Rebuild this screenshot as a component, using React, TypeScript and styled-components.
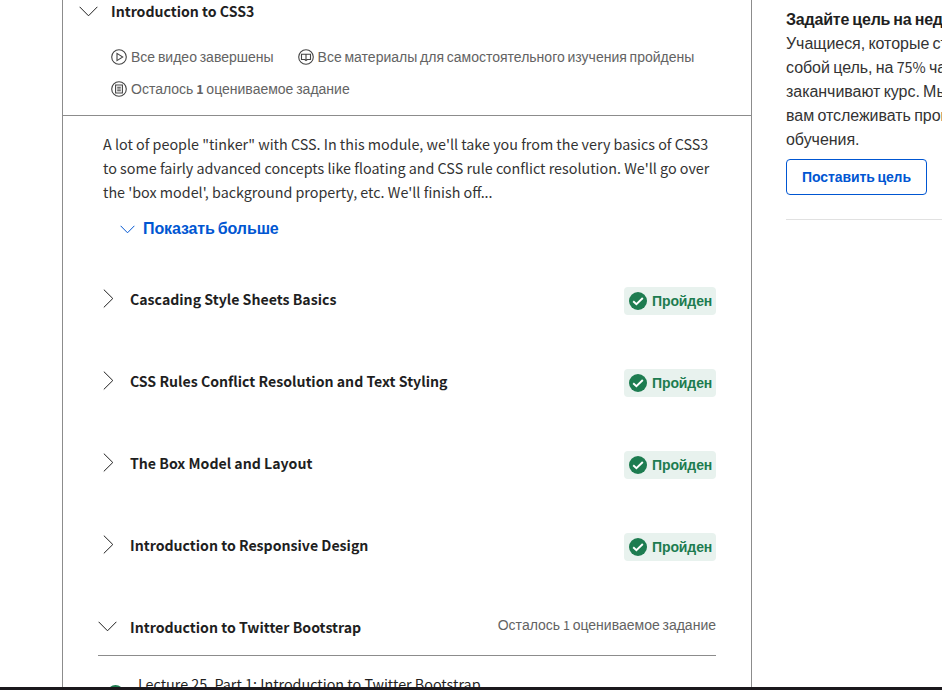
import React from 'react';
import styled, { createGlobalStyle } from 'styled-components';

const latin = '"Noto Sans CJK JP", "Noto Sans", sans-serif';
const cyrillic = '"Liberation Sans", Arial, sans-serif';
const border = '#8c8c8c';
const blue = '#0056d2';
const green = '#1d7c50';

const GlobalStyle = createGlobalStyle`
  * { box-sizing: border-box; }
  body { margin: 0; background: #fff; color: #1f1f1f; overflow: hidden; }
  h2, h3, p { margin: 0; }
`;

const Screen = styled.div`
  display: flex;
  flex-direction: column;
  width: 942px;
  height: 690px;
  overflow: hidden;
`;

const Content = styled.div`
  display: flex;
  flex: 1;
  min-height: 0;
  overflow: hidden;
  padding-left: 62px;
`;

const BottomBar = styled.div`
  flex: none;
  height: 3px;
  background: #1b181c;
`;

const Module = styled.main`
  flex: none;
  width: 690px;
  height: 760px;
  border: solid ${border};
  border-width: 0 1px;
`;

const ModuleHeader = styled.header`
  height: 116px;
  border-bottom: 1px solid ${border};
`;

const ModuleTitle = styled.div`
  display: flex;
  align-items: center;
  height: 22px;
  padding-left: 16px;
  gap: 13px;
`;

const Title = styled.h2`
  font: 700 14.12px/24px ${latin};
  white-space: nowrap;
`;

const Statuses = styled.div`
  display: flex;
  flex-wrap: wrap;
  column-gap: 24px;
  padding: 19px 0 0 48px;
`;

const Status = styled.div`
  display: flex;
  align-items: center;
  height: 32px;
  gap: 4px;
`;

const Muted = styled.span`
  font: 400 14px/20px ${cyrillic};
  word-spacing: -1.1px;
  color: #636363;
  white-space: nowrap;
`;

const Digits = styled.span<{ $bold?: boolean; $size?: number }>`
  font-family: ${latin};
  font-size: ${(p) => p.$size ?? 12.6}px;
  font-weight: ${(p) => (p.$bold ? 700 : 400)};
  line-height: 1;
`;

const Description = styled.p`
  padding: 16px 0 0 40px;
  font: 400 14.34px/24px ${latin};
  white-space: pre-line;
  color: #333;
`;

const ShowMore = styled.button`
  display: flex;
  align-items: center;
  gap: 8px;
  height: 24px;
  margin: 13px 0 0 57px;
  padding: 0;
  border: 0;
  background: none;
  color: ${blue};
  font: 700 16px/24px ${cyrillic};
  word-spacing: -1.2px;
  letter-spacing: -0.12px;
`;

const Lessons = styled.div`
  padding: 17px 35px 0;
`;

const Lesson = styled.section`
  display: flex;
  align-items: center;
  height: 82px;
`;

const LessonIcon = styled.span`
  display: flex;
  width: 32px;
`;

const LessonTitle = styled.h3`
  flex: 1;
  font: 700 14.14px/24px ${latin};
  white-space: nowrap;
`;

const Badge = styled.span`
  display: flex;
  align-items: center;
  gap: 5px;
  width: 92px;
  height: 28px;
  margin-top: 3px;
  padding-left: 5px;
  border-radius: 4px;
  background: #e8f2ee;
  color: ${green};
  font: 700 14px/20px ${cyrillic};
  letter-spacing: -0.1px;
`;

const OpenLesson = styled.section`
  display: flex;
  align-items: center;
  height: 58px;
  margin-top: 12px;
  border-bottom: 1px solid ${border};
`;

const Remaining = styled(Muted)`
  margin-top: -4px;
`;

const Lecture = styled.div`
  display: flex;
  align-items: flex-start;
  gap: 14px;
  padding: 16px 0 0 9px;
  font: 400 14.34px/24px ${latin};
  white-space: nowrap;
`;

const LectureIcon = styled.span`
  display: flex;
  width: 17px;
  padding-top: 13px;
`;

const Aside = styled.aside`
  flex: none;
  width: 250px;
  height: 220px;
  margin-left: 34px;
  padding-top: 8px;
  border-bottom: 1px solid #e1e1e1;
  font: 400 16px/24px ${cyrillic};
  word-spacing: -1.1px;
  letter-spacing: -0.04px;
  white-space: nowrap;
  color: #333;
`;

const GoalTitle = styled.h3`
  font: 700 16px/24px ${cyrillic};
  color: #1f1f1f;
  letter-spacing: -0.2px;
`;

const GoalButton = styled.button`
  display: block;
  width: 141px;
  height: 36px;
  margin-top: 7px;
  padding: 0;
  border: 1px solid ${blue};
  border-radius: 4px;
  background: #fff;
  color: ${blue};
  font: 700 14px/20px ${cyrillic};
  word-spacing: -1.1px;
  letter-spacing: -0.1px;
`;

const ChevronDown = ({ small = false }: { small?: boolean }) => (
  <svg
    width={small ? 15 : 19}
    height={small ? 9 : 11}
    viewBox={small ? '0 0 15 9' : '0 0 19 11'}
    fill="none"
    stroke="currentColor"
    strokeWidth="1"
  >
    <path d={small ? 'M.6.8 7.5 7.8 14.4.8' : 'M.6.8 9.5 9.8 18.4.8'} />
  </svg>
);

const ChevronRight = () => (
  <svg width="20" height="20" viewBox="0 0 20 20" fill="none" stroke="#1f1f1f" strokeWidth="1">
    <path d="M5.8.6 14.8 9.5 5.8 18.4" />
  </svg>
);

const CheckIcon = ({ size }: { size: number }) => (
  <svg width={size} height={size} viewBox="0 0 18 18">
    <circle cx="9" cy="9" r="9" fill={green} />
    <path d="m4.2 9.3 3.2 3 6.4-6.3" fill="none" stroke="#fff" strokeWidth="1.9" />
  </svg>
);

const glyphs = {
  video: <path d="M6 4.4v7.2L11.7 8z" />,
  reading: <path d="M8 5.2v6.4M3.5 5.2h9v5.3h-3.2L8 11.6l-1.3-1.1H3.5z" />,
  task: <path d="M4.6 4h6.8v8H4.6zM6.2 6.3h3.6M6.2 8h3.6M6.2 9.7h3.6" />,
};

const StatusIcon = ({ kind }: { kind: keyof typeof glyphs }) => (
  <svg width="16" height="16" viewBox="0 0 16 16" fill="none" stroke="#444" strokeWidth="1.1">
    <circle cx="8" cy="8" r="7.3" />
    {glyphs[kind]}
  </svg>
);

const lessons = [
  'Cascading Style Sheets Basics',
  'CSS Rules Conflict Resolution and Text Styling',
  'The Box Model and Layout',
  'Introduction to Responsive Design',
];

const description = `A lot of people "tinker" with CSS. In this module, we'll take you from the very basics of CSS3
to some fairly advanced concepts like floating and CSS rule conflict resolution. We'll go over
the 'box model', background property, etc. We'll finish off...`;

export default function App() {
  return (
    <Screen>
      <GlobalStyle />
      <Content>
        <Module>
          <ModuleHeader>
            <ModuleTitle>
              <ChevronDown />
              <Title>Introduction to CSS3</Title>
            </ModuleTitle>
            <Statuses>
              <Status>
                <StatusIcon kind="video" />
                <Muted>Все видео завершены</Muted>
              </Status>
              <Status>
                <StatusIcon kind="reading" />
                <Muted>Все материалы для самостоятельного изучения пройдены</Muted>
              </Status>
              <Status>
                <StatusIcon kind="task" />
                <Muted>
                  Осталось <Digits $bold>1</Digits> оцениваемое задание
                </Muted>
              </Status>
            </Statuses>
          </ModuleHeader>
          <Description>{description}</Description>
          <ShowMore>
            <ChevronDown small />
            Показать больше
          </ShowMore>
          <Lessons>
            {lessons.map((name) => (
              <Lesson key={name}>
                <LessonIcon>
                  <ChevronRight />
                </LessonIcon>
                <LessonTitle>{name}</LessonTitle>
                <Badge>
                  <CheckIcon size={18} />
                  Пройден
                </Badge>
              </Lesson>
            ))}
            <OpenLesson>
              <LessonIcon>
                <ChevronDown />
              </LessonIcon>
              <LessonTitle>Introduction to Twitter Bootstrap</LessonTitle>
              <Remaining>
                Осталось <Digits>1</Digits> оцениваемое задание
              </Remaining>
            </OpenLesson>
            <Lecture>
              <LectureIcon>
                <CheckIcon size={17} />
              </LectureIcon>
              Lecture 25, Part 1: Introduction to Twitter Bootstrap
            </Lecture>
          </Lessons>
        </Module>
        <Aside>
          <GoalTitle>Задайте цель на неделю</GoalTitle>
          <p>
            Учащиеся, которые ставят перед
            <br />
            собой цель, на <Digits $size={14.3}>75%</Digits> чаще
            <br />
            заканчивают курс. Мы поможем
            <br />
            вам отслеживать прогресс
            <br />
            обучения.
          </p>
          <GoalButton>Поставить цель</GoalButton>
        </Aside>
      </Content>
      <BottomBar />
    </Screen>
  );
}
